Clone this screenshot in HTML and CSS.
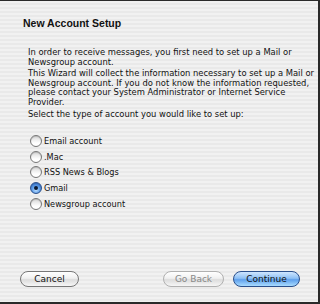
FILE: index.html
```html
<!DOCTYPE html>
<html>
<head>
<meta charset="utf-8">
<link rel="stylesheet" href="styles.css">
</head>
<body>
<div class="window">
  <h1 class="title">New Account Setup</h1>
  <div class="content">
    <p class="para">In order to receive messages, you first need to set up a Mail or Newsgroup account.</p>
    <p class="para">This Wizard will collect the information necessary to set up a Mail or Newsgroup account. If you do not know the information requested, please contact your System Administrator or Internet Service Provider.</p>
    <p class="para">Select the type of account you would like to set up:</p>
  </div>
  <ul class="radios">
    <li class="radio-row"><span class="radio"></span><span class="label">Email account</span></li>
    <li class="radio-row"><span class="radio"></span><span class="label">.Mac</span></li>
    <li class="radio-row"><span class="radio"></span><span class="label">RSS News &amp; Blogs</span></li>
    <li class="radio-row"><span class="radio checked"></span><span class="label">Gmail</span></li>
    <li class="radio-row"><span class="radio"></span><span class="label">Newsgroup account</span></li>
  </ul>
  <div class="footer">
    <button class="btn">Cancel</button>
    <div class="right">
      <button class="btn disabled">Go Back</button>
      <button class="btn primary">Continue</button>
    </div>
  </div>
</div>
</body>
</html>
```
FILE: styles.css
```css
html, body {
  margin: 0;
  padding: 0;
}
body {
  width: 320px;
  height: 304px;
  overflow: hidden;
  font-family: "DejaVu Sans", "Liberation Sans", sans-serif;
  color: #111;
}
.window {
  box-sizing: border-box;
  width: 320px;
  height: 304px;
  border-top: 1px solid #2a2a2a;
  border-right: 2px solid #2a2a2a;
  border-bottom: 2px solid #2a2a2a;
  background: repeating-linear-gradient(to bottom, #f1f1f1 0px, #f1f1f1 2px, #e9e9e9 2px, #e9e9e9 4px);
  display: flex;
  flex-direction: column;
}
.title {
  margin: 16px 0 0 23px;
  font-family: "Liberation Sans", "DejaVu Sans", sans-serif;
  font-size: 10.5px;
  font-weight: bold;
  line-height: 12px;
}
.content {
  margin: 19px 0 0 28px;
  width: 286px;
}
.para {
  margin: 0 0 2px 0;
  font-size: 8.4px;
  line-height: 9.6px;
}
.radios {
  list-style: none;
  margin: 12px 0 0 30px;
  padding: 0;
}
.radio-row {
  display: flex;
  align-items: center;
  height: 15.7px;
}
.radio {
  box-sizing: border-box;
  width: 12px;
  height: 12px;
  border-radius: 50%;
  border: 1px solid #777;
  background: linear-gradient(to bottom, #d8d8d8, #ffffff 70%);
  box-shadow: inset 0 1px 1px rgba(0,0,0,0.15);
  margin-right: 2px;
  position: relative;
}
.radio.checked {
  border-color: #2b4f8a;
  background: radial-gradient(circle at 50% 70%, #bfe0ff 0%, #5c9ce8 45%, #2b64c2 100%);
}
.radio.checked::after {
  content: "";
  position: absolute;
  left: 3px;
  top: 3px;
  width: 4px;
  height: 4px;
  border-radius: 50%;
  background: #0a1830;
}
.label {
  font-size: 8.2px;
}
.footer {
  margin: auto 0 15px 0;
  padding: 0 18px 0 20px;
  display: flex;
  justify-content: space-between;
  align-items: center;
}
.right {
  display: flex;
  gap: 9px;
}
.btn {
  box-sizing: border-box;
  height: 16px;
  border-radius: 8px;
  border: 1px solid #777;
  background: linear-gradient(to bottom, #ffffff 0%, #f0f0f0 45%, #dcdcdc 55%, #f6f6f6 100%);
  font-family: "DejaVu Sans", "Liberation Sans", sans-serif;
  font-size: 9px;
  color: #111;
  padding: 0;
  width: 59px;
  line-height: 14px;
}
.btn.disabled {
  width: 61px;
  color: #888;
  border-color: #b0b0b0;
}
.btn.primary {
  width: 67px;
  border-color: #2a4f8c;
  background: linear-gradient(to bottom, #cfe6ff 0%, #8ec0f5 45%, #5fa0ec 55%, #a9dcff 100%);
}
```
